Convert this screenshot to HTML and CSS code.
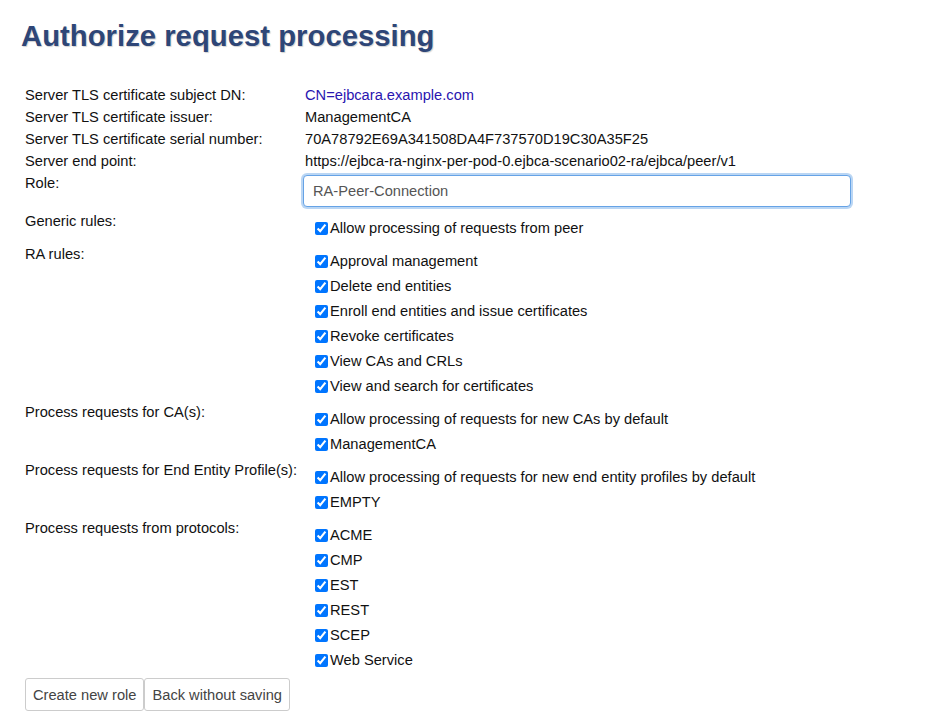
FILE: index.html
```html
<!DOCTYPE html>
<html>
<head>
<meta charset="utf-8">
<link rel="stylesheet" href="styles.css">
<title>Authorize request processing</title>
</head>
<body>
<h1 class="title">Authorize request processing</h1>
<div class="form">
  <div class="info-row"><div class="label">Server TLS certificate subject DN:</div><div class="value link">CN=ejbcara.example.com</div></div>
  <div class="info-row"><div class="label">Server TLS certificate issuer:</div><div class="value">ManagementCA</div></div>
  <div class="info-row"><div class="label">Server TLS certificate serial number:</div><div class="value">70A78792E69A341508DA4F737570D19C30A35F25</div></div>
  <div class="info-row"><div class="label">Server end point:</div><div class="value">https://ejbca-ra-nginx-per-pod-0.ejbca-scenario02-ra/ejbca/peer/v1</div></div>
  <div class="role-row"><div class="label">Role:</div><div class="value"><input class="role-input" type="text" value="RA-Peer-Connection"></div></div>

  <div class="check-row"><div class="label">Generic rules:</div>
    <div class="checks">
      <label class="check"><input type="checkbox" checked>Allow processing of requests from peer</label>
    </div>
  </div>
  <div class="check-row"><div class="label">RA rules:</div>
    <div class="checks">
      <label class="check"><input type="checkbox" checked>Approval management</label>
      <label class="check"><input type="checkbox" checked>Delete end entities</label>
      <label class="check"><input type="checkbox" checked>Enroll end entities and issue certificates</label>
      <label class="check"><input type="checkbox" checked>Revoke certificates</label>
      <label class="check"><input type="checkbox" checked>View CAs and CRLs</label>
      <label class="check"><input type="checkbox" checked>View and search for certificates</label>
    </div>
  </div>
  <div class="check-row"><div class="label">Process requests for CA(s):</div>
    <div class="checks">
      <label class="check"><input type="checkbox" checked>Allow processing of requests for new CAs by default</label>
      <label class="check"><input type="checkbox" checked>ManagementCA</label>
    </div>
  </div>
  <div class="check-row"><div class="label">Process requests for End Entity Profile(s):</div>
    <div class="checks">
      <label class="check"><input type="checkbox" checked>Allow processing of requests for new end entity profiles by default</label>
      <label class="check"><input type="checkbox" checked>EMPTY</label>
    </div>
  </div>
  <div class="check-row"><div class="label">Process requests from protocols:</div>
    <div class="checks">
      <label class="check"><input type="checkbox" checked>ACME</label>
      <label class="check"><input type="checkbox" checked>CMP</label>
      <label class="check"><input type="checkbox" checked>EST</label>
      <label class="check"><input type="checkbox" checked>REST</label>
      <label class="check"><input type="checkbox" checked>SCEP</label>
      <label class="check"><input type="checkbox" checked>Web Service</label>
    </div>
  </div>
  <div class="actions">
    <button class="btn" type="button">Create new role</button><button class="btn" type="button">Back without saving</button>
  </div>
</div>
</body>
</html>
```
FILE: styles.css
```css
html, body {
  margin: 0;
  padding: 0;
  background: #fff;
}
body {
  font-family: "Liberation Sans", Arial, sans-serif;
  font-size: 14.67px;
  color: #111;
  padding: 0 0 0 21px;
  overflow: hidden;
}
.title {
  margin: 0;
  padding-top: 18px;
  height: 67px;
  box-sizing: border-box;
  font-size: 29.3px;
  line-height: 36px;
  font-weight: bold;
  color: #2e4677;
  text-shadow: 1px 1px 1px rgba(0, 0, 0, 0.18);
}
.form {
  padding-left: 4px;
}
.info-row, .role-row, .check-row {
  display: grid;
  grid-template-columns: 280px 1fr;
}
.info-row {
  height: 22px;
  line-height: 22px;
}
.info-row:first-child {
  margin-top: 17px;
}
.link {
  color: #2a15b0;
}
.role-row {
  padding: 3px 0 5px;
  line-height: 17px;
}
.role-input {
  display: block;
  box-sizing: border-box;
  width: 548px;
  height: 32px;
  margin: 0 0 0 -2px;
  padding: 0 9px;
  font-family: "Liberation Sans", Arial, sans-serif;
  font-size: 14.67px;
  color: #555;
  border: 1px solid #66a3e6;
  border-radius: 4px;
  box-shadow: 0 0 0 2px rgba(102, 163, 230, 0.45);
  outline: none;
  background: #fff;
}
.check-row {
  line-height: 17px;
}
.check-row .label {
  padding-top: 1px;
}
.checks {
  display: flex;
  flex-direction: column;
  padding: 4px 0 4px 6px;
}
.check {
  display: flex;
  align-items: center;
  height: 25px;
}
.check input {
  width: 13px;
  height: 13px;
  margin: 0 2px 0 4px;
}
.actions {
  display: flex;
  margin-top: 1px;
}
.btn {
  height: 33px;
  padding: 0 7px;
  font-family: "Liberation Sans", Arial, sans-serif;
  font-size: 14.67px;
  color: #444;
  background: #fff;
  border: 1px solid #ccc;
  border-radius: 3px;
}
```
